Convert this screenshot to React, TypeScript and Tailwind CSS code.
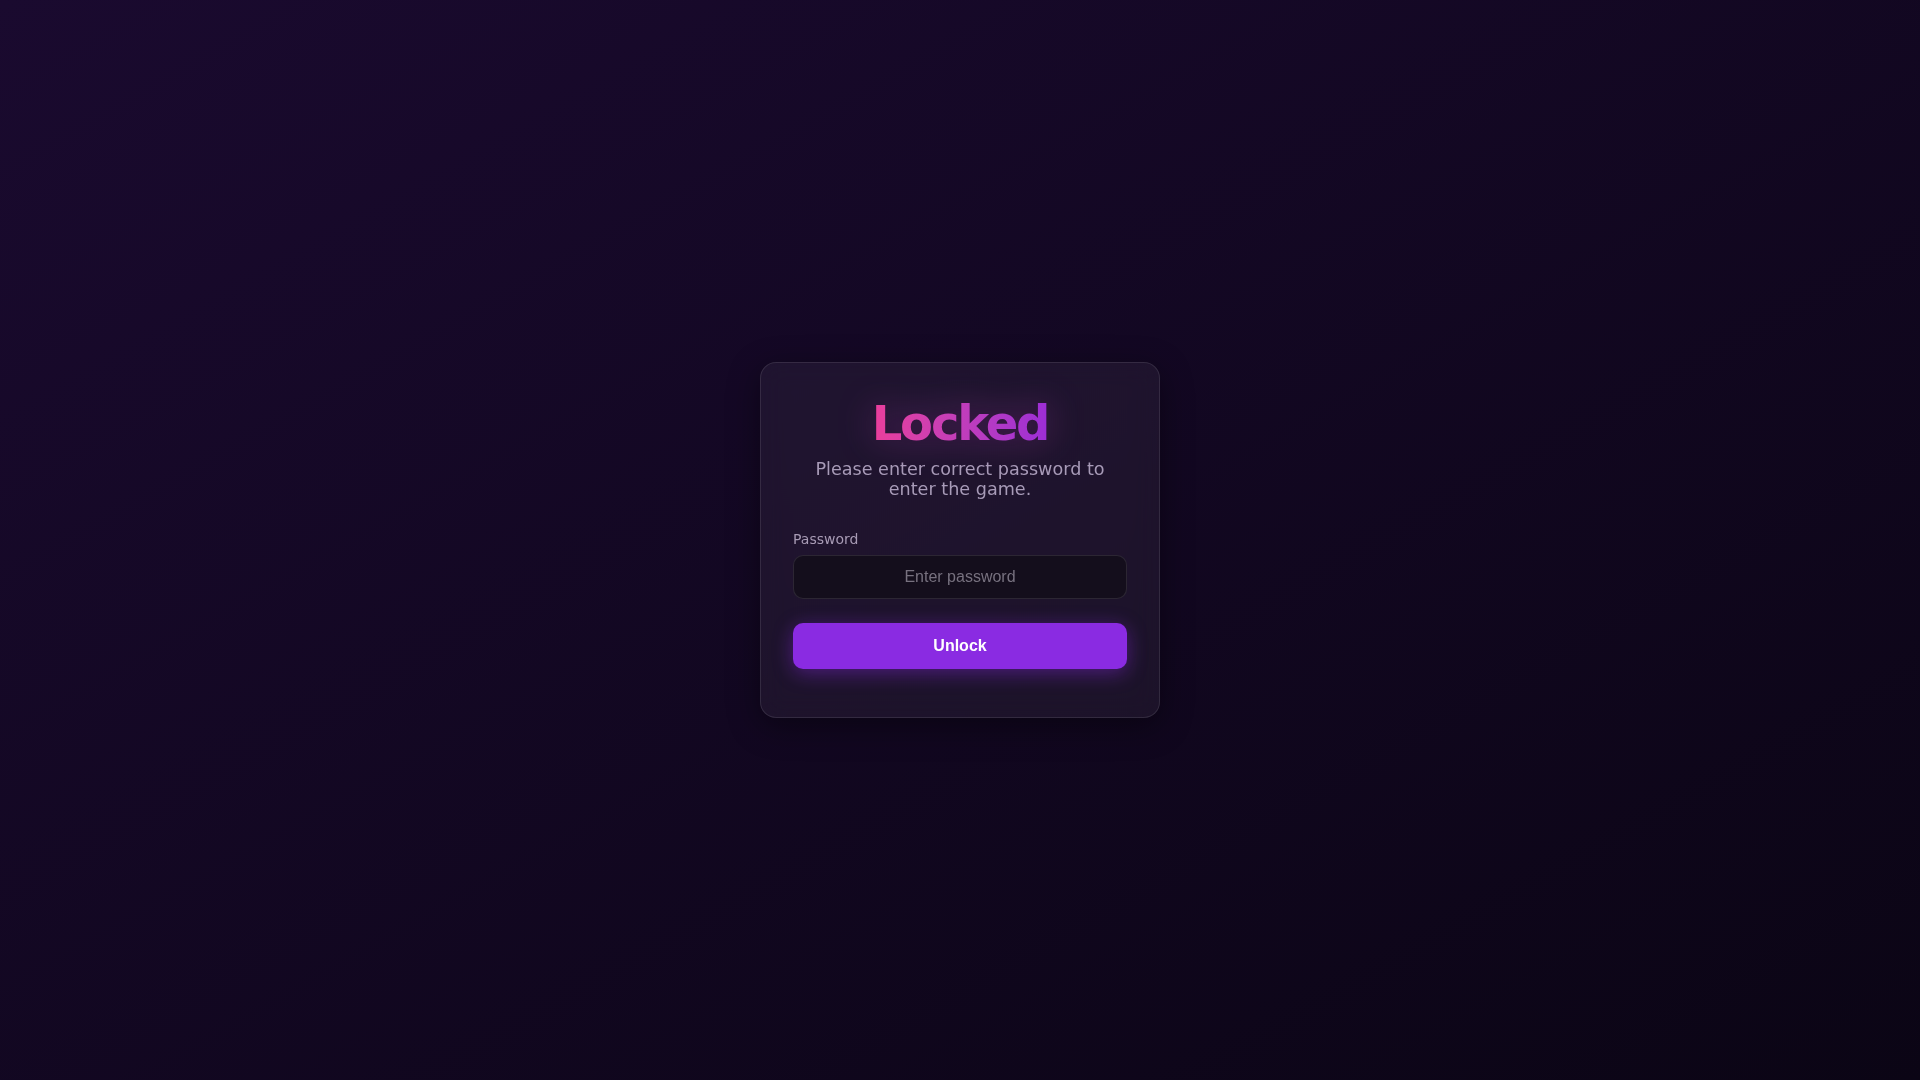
import { useState } from 'react'

export default function App() {
  const [password, setPassword] = useState('')

  return (
    <div className="min-h-screen w-full flex items-center justify-center bg-gradient-to-br from-[#1a0a2f] to-[#0b0515] font-['DejaVu_Sans',sans-serif]">
      {/* Lock card */}
      <div className="w-[400px] rounded-2xl border border-white/10 bg-white/[0.05] px-8 pt-8 pb-12 shadow-[0_8px_32px_rgba(0,0,0,0.4)] backdrop-blur-md">
        <div className="flex justify-center">
          <h1 className="inline-block bg-gradient-to-r from-[#ea3e9b] to-[#9c2dd6] bg-clip-text text-5xl leading-[normal] font-bold tracking-[-0.045em] text-transparent drop-shadow-[0_0_18px_rgba(200,60,200,0.35)]">
            Locked
          </h1>
        </div>
        <p className="mt-2 text-center text-[17.6px] leading-5 text-[#a89bb8]">
          Please enter correct password to enter the game.
        </p>

        <form
          className="mt-[30px] flex flex-col"
          onSubmit={(e) => e.preventDefault()}
        >
          <label htmlFor="pw" className="text-sm text-[#a89bb5]">
            Password
          </label>
          <input
            id="pw"
            type="password"
            value={password}
            onChange={(e) => setPassword(e.target.value)}
            placeholder="Enter password"
            className="mt-[6px] h-11 w-full rounded-[10px] border border-white/10 bg-[#140e1c] px-4 text-center font-['Liberation_Sans',Arial,sans-serif] text-base text-white outline-none placeholder:text-[#77717f]"
          />
          <button
            type="submit"
            className="mt-6 h-[46px] w-full rounded-[10px] bg-[#8a2be2] font-['Liberation_Sans',Arial,sans-serif] text-base font-bold text-white shadow-[0_4px_20px_rgba(138,43,226,0.45)]"
          >
            Unlock
          </button>
        </form>
      </div>
    </div>
  )
}
